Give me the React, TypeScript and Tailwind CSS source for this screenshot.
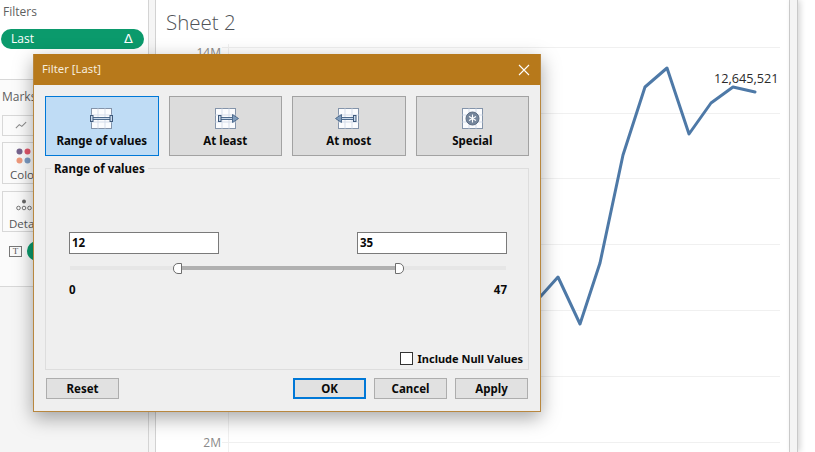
import type { ReactNode } from 'react'

type TabKind = 'range' | 'least' | 'most' | 'special'

const tabs: { kind: TabKind; label: string; active?: boolean }[] = [
  { kind: 'range', label: 'Range of values', active: true },
  { kind: 'least', label: 'At least' },
  { kind: 'most', label: 'At most' },
  { kind: 'special', label: 'Special' },
]

const linePoints = '497,340 541,296 558,277 580,324 600,263 623,155 645,87 667,68 689,134 711,103 733,87 755,92'
const gridLines = [47, 113, 178, 244, 310, 376, 442]

function TabIcon({ kind }: { kind: TabKind }) {
  const grid = (
    <>
      <rect x="4.5" y="0.5" width="20" height="20" fill="#fbfcfe" stroke="#8494aa" />
      <path d="M4.5 7H24.5M4.5 14H24.5M11 0.5V20.5M18 0.5V20.5" stroke="#d5ddea" />
    </>
  )
  return (
    <svg width="29" height="21" viewBox="0 0 29 21" className="shrink-0">
      {grid}
      {kind === 'range' && (
        <>
          <path d="M5 10.5H24" stroke="#4f6c8e" strokeWidth="3" />
          <path d="M6 10.5H23" stroke="#c9d8ea" />
          <rect x="3.5" y="7.5" width="2.5" height="6" fill="#c9d8ea" stroke="#3f5a7c" />
          <rect x="23" y="7.5" width="2.5" height="6" fill="#c9d8ea" stroke="#3f5a7c" />
        </>
      )}
      {kind === 'least' && (
        <>
          <path d="M9 10.5H22" stroke="#4f6c8e" strokeWidth="3" />
          <path d="M10 10.5H22" stroke="#c9d8ea" />
          <rect x="7.5" y="7.5" width="2.5" height="6" fill="#c9d8ea" stroke="#3f5a7c" />
          <path d="M21.5 6.5L27.5 10.5L21.5 14.5Z" fill="#7f9cbc" stroke="#4f6c8e" />
        </>
      )}
      {kind === 'most' && (
        <>
          <path d="M7 10.5H20" stroke="#4f6c8e" strokeWidth="3" />
          <path d="M7 10.5H19" stroke="#c9d8ea" />
          <rect x="19.5" y="7.5" width="2.5" height="6" fill="#c9d8ea" stroke="#3f5a7c" />
          <path d="M7.5 6.5L1.5 10.5L7.5 14.5Z" fill="#7f9cbc" stroke="#4f6c8e" />
        </>
      )}
      {kind === 'special' && (
        <>
          <circle cx="14.5" cy="10.5" r="6.5" fill="#75869c" stroke="#5c6c82" />
          <path d="M14.5 6.5V14.5M11 8.5L18 12.5M18 8.5L11 12.5" stroke="#ffffff" strokeWidth="1.1" />
        </>
      )}
    </svg>
  )
}

function DialogButton({ children, primary }: { children: ReactNode; primary?: boolean }) {
  return (
    <button
      className={`h-[21px] w-[73px] bg-[#e1e1e1] text-[11.5px] font-bold text-[#0a0a0a] ${
        primary ? 'border-2 border-[#0078d7]' : 'border border-[#adadad]'
      }`}
    >
      {children}
    </button>
  )
}

function ValueInput({ value }: { value: string }) {
  return (
    <div className="flex h-[22px] w-[150px] items-center border border-[#7a7a7a] bg-white px-[2px] text-[11.5px] font-bold text-[#0a0a0a]">
      {value}
    </div>
  )
}

function SliderThumb({ className }: { className: string }) {
  return (
    <span
      className={`absolute top-[-3px] h-[11px] w-[9px] rounded-l-[5px] border border-[#6e6e6e] bg-white ${className}`}
    />
  )
}

export default function App() {
  return (
    <div className="relative flex h-[452px] w-[815px] overflow-hidden bg-white font-['Open_Sans',sans-serif]">
      {/* left shelf column */}
      <aside className="flex h-full w-[149px] shrink-0 flex-col border-r border-[#d4d4d4] bg-white">
        <div className="h-[80px] border-b border-[#d8d8d8] px-[3px]">
          <div className="mt-[3px] text-[12px] leading-[17px] text-[#5f5f5f]">Filters</div>
          <div className="ml-[-2px] mt-[9px] flex h-[20px] w-[143px] items-center justify-between rounded-full bg-[#0b9a6c] pl-[10px] pr-[11px] text-[12px] text-white">
            <span>Last</span>
            <span className="font-['DejaVu_Sans',sans-serif] text-[13px] leading-[20px]">Δ</span>
          </div>
        </div>
        <div className="h-[207px] border-b border-[#d8d8d8] bg-[#fbfbfb] pl-[2px]">
          <div className="mt-[8px] text-[12px] leading-[17px] text-[#5f5f5f]">Marks</div>
          <div className="mt-[10px] flex h-[21px] w-[100px] items-center border border-[#d8d8d8] pl-[12px]">
            <svg width="12" height="9" viewBox="0 0 14 10">
              <path d="M1 8L5 4L8 6L13 1" fill="none" stroke="#8a8a8a" strokeWidth="1.2" />
            </svg>
          </div>
          <div className="mt-[6px] flex h-[42px] w-[100px] flex-col items-start border border-[#d8d8d8] pl-[13px] pt-[5px]">
            <svg width="15" height="16" viewBox="0 0 15 16">
              <circle cx="3.5" cy="3.5" r="3" fill="#76648e" />
              <circle cx="11.5" cy="3.5" r="3" fill="#e2566a" />
              <circle cx="3.5" cy="12.5" r="3" fill="#ef9a7c" />
              <circle cx="11.5" cy="12.5" r="3" fill="#7c9cc4" />
            </svg>
            <span className="ml-[-6px] mt-[3px] text-[11.5px] leading-[15px] text-[#555555]">Color</span>
          </div>
          <div className="mt-[7px] flex h-[41px] w-[100px] flex-col items-start border border-[#d8d8d8] pl-[13px] pt-[7px]">
            <svg width="16" height="12" viewBox="0 0 16 12">
              <circle cx="8" cy="2.5" r="2" fill="#666666" />
              <circle cx="2.5" cy="9" r="1.8" fill="none" stroke="#666666" strokeWidth="0.9" />
              <circle cx="8" cy="9" r="1.8" fill="none" stroke="#666666" strokeWidth="0.9" />
              <circle cx="13.5" cy="9" r="1.8" fill="none" stroke="#666666" strokeWidth="0.9" />
            </svg>
            <span className="ml-[-7px] mt-[5px] text-[11.5px] leading-[15px] text-[#555555]">Detail</span>
          </div>
          <div className="ml-[7px] mt-[9px] flex items-center gap-[5px]">
            <span className="flex h-[11px] w-[13px] items-center justify-center border border-[#777777] font-['Liberation_Serif',serif] text-[9px] leading-none text-[#555555]">
              T
            </span>
            <span className="h-[20px] w-[70px] rounded-full bg-[#0b9a6c]" />
          </div>
        </div>
        <div className="flex-1 bg-[#f5f5f5]" />
      </aside>

      <div className="w-[6px] shrink-0 bg-[#f5f5f5]" />

      {/* worksheet */}
      <main className="flex h-full w-[635px] shrink-0 flex-col border-x border-[#d2d2d2] bg-white">
        <h1 className="ml-[10px] mt-[7px] h-[30px] text-[20.5px] font-light leading-[30px] text-[#4f5358]">Sheet 2</h1>
        <svg width="633" height="415" viewBox="156 37 633 415" className="block">
          {gridLines.map((y) => (
            <line key={y} x1="222" x2="780" y1={y + 0.5} y2={y + 0.5} stroke="#f0f0f0" />
          ))}
          <line x1="228.5" x2="228.5" y1="44" y2="452" stroke="#f0f0f0" />
          <text x="221" y="57" textAnchor="end" fontSize="12" fill="#8a8a8a">14M</text>
          <text x="221" y="447" textAnchor="end" fontSize="12" fill="#8a8a8a">2M</text>
          <polyline points={linePoints} fill="none" stroke="#4e79a7" strokeWidth="3" strokeLinejoin="round" strokeLinecap="round" />
          <text x="714" y="83" fontSize="12.7" fill="#2a2a2a">12,645,521</text>
        </svg>
      </main>

      <div className="w-[8px] shrink-0 border-r border-[#c9c9c9] bg-[#f4f4f4] shadow-[2px_0_6px_rgba(0,0,0,0.18)]" />

      {/* filter dialog */}
      <div className="absolute left-[33px] top-[54px] flex h-[358px] w-[508px] flex-col border border-t-0 border-[#b8873f] bg-[#efefef] font-['Noto_Sans',sans-serif] shadow-[0_6px_18px_rgba(0,0,0,0.35)]">
        <div className="flex h-[31px] shrink-0 items-center justify-between bg-[#b7791b] pl-[8px] pr-[10px] text-[11.3px] text-[#f6ecdc]">
          <span>Filter [Last]</span>
          <svg width="12" height="12" viewBox="0 0 12 12">
            <path d="M1 1L11 11M11 1L1 11" stroke="#ffffff" strokeWidth="1.1" />
          </svg>
        </div>

        <div className="ml-[11px] mt-[11px] flex w-[484px] gap-[10px]">
          {tabs.map((tab) => (
            <div
              key={tab.kind}
              className={`flex h-[60px] flex-1 flex-col items-center border pt-[11px] text-[11.5px] font-bold text-[#0a0a0a] ${
                tab.active ? 'border-[#0078d7] bg-[#bfdcf5]' : 'border-[#a2a2a2] bg-[#dcdcdc]'
              }`}
            >
              <TabIcon kind={tab.kind} />
              <span className="mt-[4px] leading-[16px]">{tab.label}</span>
            </div>
          ))}
        </div>

        <div className="relative ml-[11px] mt-[12px] h-[202px] w-[484px] border border-[#dddddd] pl-[23px] pr-[21px] pt-[63px]">
          <span className="absolute left-[5px] top-[-7px] bg-[#efefef] px-[3px] text-[11.5px] font-bold leading-[14px] text-[#0a0a0a]">
            Range of values
          </span>
          <div className="flex justify-between">
            <ValueInput value="12" />
            <ValueInput value="35" />
          </div>
          <div className="relative ml-[1px] mt-[12px] h-[4px] w-[436px] bg-[#e6e6e6]">
            <div className="ml-[107px] h-[4px] w-[222px] bg-[#b0b0b0]" />
            <SliderThumb className="left-[103px]" />
            <SliderThumb className="left-[325px] rotate-180" />
          </div>
          <div className="mt-[12px] flex justify-between text-[11.5px] font-bold leading-[16px] text-[#0a0a0a]">
            <span>0</span>
            <span>47</span>
          </div>
          <div className="absolute bottom-[3px] right-[5px] flex items-center gap-[5px] text-[11px] font-bold leading-[14px] text-[#0a0a0a]">
            <span className="h-[13px] w-[13px] border border-[#333333] bg-white" />
            <span className="mt-[1px]">Include Null Values</span>
          </div>
        </div>

        <div className="ml-[12px] mt-[8px] flex w-[482px] items-center">
          <DialogButton>Reset</DialogButton>
          <div className="ml-auto flex gap-[8px]">
            <DialogButton primary>OK</DialogButton>
            <DialogButton>Cancel</DialogButton>
            <DialogButton>Apply</DialogButton>
          </div>
        </div>
      </div>
    </div>
  )
}
